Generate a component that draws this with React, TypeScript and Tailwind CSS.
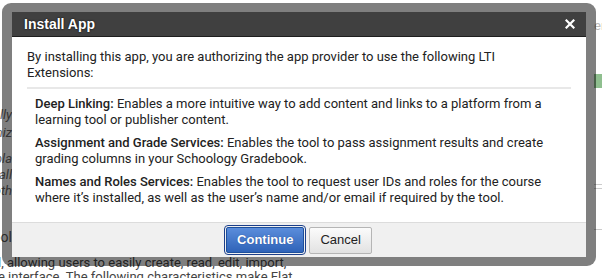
import React from "react";

const leftFrags: { t: string; mt: number }[] = [
  { t: "ally", mt: 107 },
  { t: "aniz", mt: 2 },
  { t: "pla", mt: 10 },
  { t: "all", mt: 0 },
  { t: "oth", mt: 0 },
];

export default function App() {
  return (
    <div className="relative w-[602px] h-[278px] overflow-hidden bg-white font-['Roboto',sans-serif]">
      {/* background page */}
      <div className="flex flex-col h-full">
        <div className="flex flex-1">
          <div className="w-[12px] flex flex-col">
            {leftFrags.map((f, i) => (
              <div
                key={i}
                className="flex justify-end overflow-hidden whitespace-nowrap italic text-[13px] leading-[16px] text-[#666]"
                style={{ marginTop: f.mt }}
              >
                <span>{f.t}</span>
              </div>
            ))}
            <div className="flex justify-end overflow-hidden whitespace-nowrap text-[14px] leading-[16px] text-[#555] mt-[30px]">
              <span>tool</span>
            </div>
          </div>
          <div className="flex-1" />
          <div className="w-[8px] flex flex-col">
            <div className="mt-[18px] overflow-hidden whitespace-nowrap text-[13px] leading-[16px] text-[#bbb]">ent</div>
            <div className="mt-[40px] h-[14px] bg-[#8fbf8f]" />
            <div className="mt-[96px] h-px bg-[#ccc]" />
            <div className="mt-[3px] h-px bg-[#ccc]" />
            <div className="mt-[40px] h-px bg-[#ccc]" />
          </div>
        </div>
        <div className="-ml-[2px] -mb-[6px] whitespace-nowrap text-[13px] leading-[14px] text-[#444]">
          <div>l, allowing users to easily create, read, edit, import,</div>
          <div>e interface. The following characteristics make Flat</div>
        </div>
      </div>

      {/* modal overlay */}
      <div className="absolute left-[2px] top-[3px] w-[594px] h-[263px] rounded-[9px] bg-black/50 px-[10px] py-[9px]">
        <div className="flex h-full flex-col bg-white">
          <div className="flex h-[25px] items-center justify-between border-b border-[#1e1e1e] bg-[#404040] pl-[12px] pr-[11px]">
            <span className="font-['Liberation_Sans',Arial,sans-serif] text-[14px] font-bold text-white [text-shadow:0_0_2px_#000]">
              Install App
            </span>
            <svg width="10" height="10" viewBox="0 0 10 10">
              <path d="M1.5 1.5 L8.5 8.5 M8.5 1.5 L1.5 8.5" stroke="#fff" strokeWidth="2.2" strokeLinecap="square" />
            </svg>
          </div>
          <div className="flex-1 px-[15px] pt-[12px] text-[13px] leading-[16px] text-[#222]">
            <p className="pr-[12px]">
              By installing this app, you are authorizing the app provider to use the following LTI Extensions:
            </p>
            <div className="mt-[6px] h-[2px] bg-[#e8e8e8]" />
            <div className="mt-[7px] flex flex-col gap-[7px] pl-[8px] pr-[12px]">
              <p>
                <span className="font-medium">Deep Linking:</span> Enables a more intuitive way to add content and links to a platform from a learning tool or publisher content.
              </p>
              <p>
                <span className="font-medium">Assignment and Grade Services:</span> Enables the tool to pass assignment results and create grading columns in your Schoology Gradebook.
              </p>
              <p>
                <span className="font-medium">Names and Roles Services:</span> Enables the tool to request user IDs and roles for the course where it’s installed, as well as the user’s name and/or email if required by the tool.
              </p>
            </div>
          </div>
          <div className="flex h-[35px] items-center justify-center gap-[5px] border-t border-[#dcdcdc] bg-[#f0f0f0]">
            <button className="h-[26px] rounded-[2px] border border-[#1d4f9c] bg-gradient-to-b from-[#5b8ddb] to-[#2f63b8] px-[10px] font-['Liberation_Sans',Arial,sans-serif] text-[13px] font-bold text-white outline outline-1 outline-offset-1 outline-[#1c3f8a] [text-shadow:0_0_1px_#1c3f8a]">
              Continue
            </button>
            <button className="h-[27px] rounded-[2px] border border-[#b5b5b5] bg-gradient-to-b from-[#fbfbfb] to-[#e2e2e2] px-[10px] font-['Liberation_Sans',Arial,sans-serif] text-[13px] text-[#222]">
              Cancel
            </button>
          </div>
        </div>
      </div>
    </div>
  );
}
